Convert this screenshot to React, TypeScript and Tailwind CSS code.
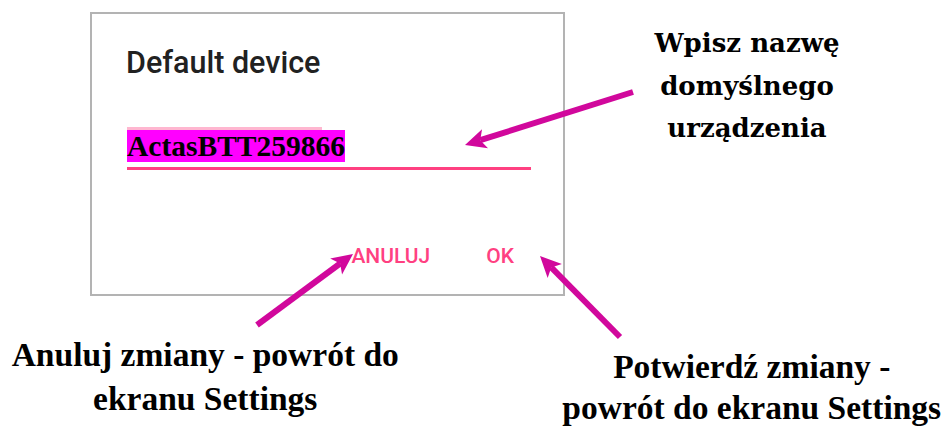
import React from "react";

const ARROW = "#d1089c";

function Arrow({ x1, y1, x2, y2 }: { x1: number; y1: number; x2: number; y2: number }) {
  const dx = x2 - x1;
  const dy = y2 - y1;
  const len = Math.hypot(dx, dy);
  const ux = dx / len;
  const uy = dy / len;
  const hl = 21;
  const hw = 10;
  const bx = x2 - ux * hl;
  const by = y2 - uy * hl;
  const px = -uy;
  const py = ux;
  const nx = x2 - ux * (hl - 5);
  const ny = y2 - uy * (hl - 5);
  const pts = `${x2},${y2} ${bx + px * hw},${by + py * hw} ${nx},${ny} ${bx - px * hw},${by - py * hw}`;
  return (
    <g>
      <line x1={x1} y1={y1} x2={nx} y2={ny} stroke={ARROW} strokeWidth={6} />
      <polygon points={pts} fill={ARROW} />
    </g>
  );
}

export default function App() {
  return (
    <div className="relative w-[951px] h-[426px] bg-white overflow-hidden">
      <div className="flex pt-[12px]">
        <div className="ml-[90px] w-[475px] h-[284px] border-2 border-[#b3b3b3] flex flex-col">
          <div
            className="pl-[34px] pt-[31px] text-[30.5px] leading-[36px] font-medium text-[#212121]"
            style={{ fontFamily: "Roboto, sans-serif" }}
          >
            Default device
          </div>
          <div className="ml-[35px] mt-[46px] w-[195px] h-[3px] bg-[#ffb6d0]" />
          <div
            className="ml-[35px] h-[33px] leading-[33px] text-[29.5px] font-bold text-black"
            style={{ fontFamily: '"Liberation Serif", serif' }}
          >
            <span className="bg-[#ff00ff]">ActasBTT259866</span>
          </div>
          <div className="ml-[35px] mt-[4px] w-[404px] h-[3px] bg-[#ff4081]" />
          <div
            className="flex justify-end gap-[56px] pr-[49px] mt-[74px] text-[21px] leading-[24px] font-medium text-[#ff4081]"
            style={{ fontFamily: "Roboto, sans-serif" }}
          >
            <span>ANULUJ</span>
            <span>OK</span>
          </div>
        </div>
        <div
          className="ml-[42px] mt-[10px] w-[280px] text-center text-[26px] leading-[42.5px] font-bold text-black"
          style={{ fontFamily: '"DejaVu Serif", serif' }}
        >
          Wpisz nazwę
          <br />
          domyślnego
          <br />
          urządzenia
        </div>
      </div>
      <div className="flex" style={{ fontFamily: '"Liberation Serif", serif' }}>
        <div className="ml-[6px] mt-[37px] w-[400px] text-center text-[33.5px] leading-[44px] font-bold text-black whitespace-nowrap">
          Anuluj zmiany - powrót do
          <br />
          ekranu Settings
        </div>
        <div className="ml-[148px] mt-[50px] w-[400px] text-center text-[33.5px] leading-[41px] font-bold text-black whitespace-nowrap">
          Potwierdź zmiany -
          <br />
          powrót do ekranu Settings
        </div>
      </div>
      <svg
        className="absolute inset-0 pointer-events-none"
        width={951}
        height={426}
        viewBox="0 0 951 426"
      >
        <Arrow x1={633} y1={92} x2={465} y2={145} />
        <Arrow x1={257} y1={325} x2={353} y2={254} />
        <Arrow x1={620} y1={337} x2={540} y2={256} />
      </svg>
    </div>
  );
}
